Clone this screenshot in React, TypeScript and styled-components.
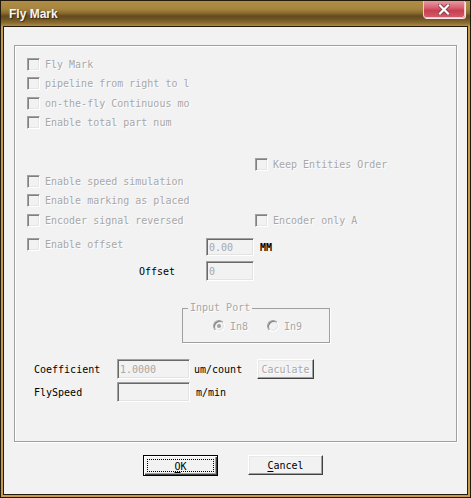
import React from "react";
import styled, { createGlobalStyle, css } from "styled-components";

const Global = createGlobalStyle`
  html, body { margin: 0; padding: 0; background: #f2f2f2; }
  body { width: 471px; height: 498px; overflow: hidden; }
`;

const mono = `"DejaVu Sans Mono", "Liberation Mono", monospace`;

const Window = styled.div`
  box-sizing: border-box;
  width: 471px;
  height: 498px;
  background: #c49c4c;
  border: 1px solid #221a0c;
  display: flex;
  flex-direction: column;
`;

const TitleBar = styled.div`
  height: 25px;
  flex: none;
  display: flex;
  align-items: flex-start;
  justify-content: space-between;
  background: linear-gradient(
    to bottom,
    #b28e48 0px,
    #a6843e 8px,
    #8a6c30 12px,
    #624b1e 15px,
    #6e5424 18px,
    #8c6c30 22px,
    #b08c44 25px
  );
`;

const Title = styled.span`
  margin: 6px 0 0 8px;
  font: bold 12px "Liberation Sans", Arial, sans-serif;
  line-height: 14px;
  color: #f4f4f4;
  text-shadow: 1px 1px 1px rgba(40, 25, 5, 0.7);
`;

const CloseButton = styled.div`
  box-sizing: border-box;
  width: 42px;
  height: 17px;
  margin-right: 5px;
  border: 1px solid #f2c6cc;
  border-top: none;
  border-radius: 0 0 3px 3px;
  background: linear-gradient(to bottom, #e89aa4 0%, #d86474 40%, #c8404f 60%, #d45868 100%);
  box-shadow: 1px 1px 0 #f8e8ea;
  display: flex;
  align-items: center;
  justify-content: center;
`;

const Client = styled.div`
  flex: 1;
  margin: 0 2px 2px;
  border: 1px solid #221a0c;
  background: #f2f2f2;
  display: flex;
  flex-direction: column;
`;

const Panel = styled.div`
  box-sizing: border-box;
  margin: 18px 0 0 10px;
  width: 443px;
  height: 397px;
  border: 1px solid #a0a0a0;
  box-shadow: inset 1px 1px 0 #fff, 1px 1px 0 #fff;
  padding-left: 12px;
  display: flex;
  flex-direction: column;
`;

const Row = styled.div<{ $mt: number; $h?: number; $top?: boolean }>`
  display: flex;
  align-items: ${(p) => (p.$top ? "flex-start" : "center")};
  height: ${(p) => p.$h ?? 16}px;
  margin-top: ${(p) => p.$mt}px;
`;

const Cell = styled.div<{ $w?: number; $ml?: number; $mt?: number }>`
  display: flex;
  align-items: center;
  flex: none;
  ${(p) => (p.$w !== undefined ? `width: ${p.$w}px;` : "")}
  margin-left: ${(p) => p.$ml ?? 0}px;
  margin-top: ${(p) => p.$mt ?? 0}px;
`;

const Box = styled.span`
  box-sizing: border-box;
  width: 13px;
  height: 13px;
  flex: none;
  border: 1px solid;
  border-color: #a0a0a0 #ffffff #ffffff #a0a0a0;
  box-shadow: inset 1px 1px 0 #808080, inset -1px -1px 0 #e6e6e6;
  background: #f2f2f2;
  margin-right: 5px;
`;

const Disabled = styled.span`
  font: 10px ${mono};
  line-height: 18px;
  height: 16px;
  color: #a8a8a8;
  text-shadow: 1px 1px 0 #ffffff;
  white-space: pre;
`;

const Label = styled.span<{ $bold?: boolean }>`
  font: ${(p) => (p.$bold ? "bold " : "")}10px ${mono};
  line-height: 18px;
  height: 16px;
  color: #000;
  white-space: pre;
`;

const Edit = styled.div<{ $w: number; $h: number }>`
  box-sizing: border-box;
  width: ${(p) => p.$w}px;
  height: ${(p) => p.$h}px;
  flex: none;
  border: 1px solid;
  border-color: #a0a0a0 #ffffff #ffffff #a0a0a0;
  box-shadow: inset 1px 1px 0 #696969, inset -1px -1px 0 #e3e3e3;
  background: #f2f2f2;
  padding: 1px 0 0 2px;
  display: flex;
  align-items: center;
  font: 10px ${mono};
  color: #a8a8a8;
`;

const RaisedButton = styled.div<{ $w: number; $default?: boolean; $disabled?: boolean }>`
  box-sizing: border-box;
  position: relative;
  width: ${(p) => p.$w}px;
  height: 20px;
  flex: none;
  background: #f2f2f2;
  border: 1px solid;
  border-color: #ffffff #404040 #404040 #ffffff;
  box-shadow: inset -1px -1px 0 #a0a0a0, inset 1px 1px 0 #e8e8e8;
  display: flex;
  align-items: center;
  justify-content: center;
  padding-top: 1px;
  font: 10px ${mono};
  color: ${(p) => (p.$disabled ? "#a8a8a8" : "#000")};
  text-shadow: ${(p) => (p.$disabled ? "1px 1px 0 #fff" : "none")};
  ${(p) =>
    p.$default &&
    css`
      height: 21px;
      border: 1px solid #000;
      box-shadow: inset 1px 1px 0 #fff, inset -1px -1px 0 #404040, inset -2px -2px 0 #a0a0a0;
    `}
`;

const FocusRect = styled.span`
  position: absolute;
  inset: 3px;
  border: 1px dotted #000;
`;

const Mnemonic = styled.span`
  text-decoration: underline;
  text-underline-offset: 2px;
`;

const Group = styled.fieldset`
  box-sizing: border-box;
  width: 148px;
  min-width: 0;
  margin: 21px 0 0 155px;
  padding: 0;
  border: 1px solid #a0a0a0;
  box-shadow: 1px 1px 0 #fff;
`;

const Legend = styled.legend`
  margin-left: 5px;
  padding: 0 2px;
  font: 10px ${mono};
  line-height: 12px;
  color: #a8a8a8;
  text-shadow: 1px 1px 0 #fff;
`;

const RadioRow = styled.div`
  display: flex;
  align-items: center;
  height: 16px;
  margin: 4px 0 8px 30px;
`;

const Radio = styled.span<{ $checked?: boolean; $ml?: number }>`
  box-sizing: border-box;
  width: 12px;
  height: 12px;
  flex: none;
  border-radius: 50%;
  border: 1px solid;
  border-color: #a0a0a0 #ffffff #ffffff #a0a0a0;
  box-shadow: inset 1px 1px 0 #808080, inset -1px -1px 0 #e3e3e3;
  background: #f2f2f2;
  margin-left: ${(p) => p.$ml ?? 0}px;
  margin-right: 5px;
  display: flex;
  align-items: center;
  justify-content: center;
  &::after {
    content: "";
    width: 4px;
    height: 4px;
    border-radius: 50%;
    background: ${(p) => (p.$checked ? "#a0a0a0" : "transparent")};
  }
`;

const Footer = styled.div`
  display: flex;
  justify-content: center;
  gap: 30px;
  margin-top: 13px;
  padding-right: 5px;
`;

const Check: React.FC<{ label: string }> = ({ label }) => (
  <>
    <Box />
    <Disabled>{label}</Disabled>
  </>
);

export default function App() {
  return (
    <>
      <Global />
      <Window>
        <TitleBar>
          <Title>Fly Mark</Title>
          <CloseButton>
            <svg width="12" height="11" viewBox="0 0 12 11">
              <path d="M2 1.5 L10 9.5 M10 1.5 L2 9.5" stroke="#8a3a44" strokeWidth="4" strokeLinecap="square" />
              <path d="M2 1.5 L10 9.5 M10 1.5 L2 9.5" stroke="#ffffff" strokeWidth="2.2" strokeLinecap="square" />
            </svg>
          </CloseButton>
        </TitleBar>
        <Client>
          <Panel>
            <Row $mt={10}>
              <Check label="Fly Mark" />
            </Row>
            <Row $mt={3}>
              <Check label="pipeline from right to l" />
            </Row>
            <Row $mt={4}>
              <Check label="on-the-fly Continuous mo" />
            </Row>
            <Row $mt={3}>
              <Check label="Enable total part num" />
            </Row>
            <Row $mt={26}>
              <Cell $ml={228}>
                <Check label="Keep Entities Order" />
              </Cell>
            </Row>
            <Row $mt={1}>
              <Check label="Enable speed simulation" />
            </Row>
            <Row $mt={3}>
              <Check label="Enable marking as placed" />
            </Row>
            <Row $mt={4}>
              <Cell $w={228}>
                <Check label="Encoder signal reversed" />
              </Cell>
              <Cell>
                <Check label="Encoder only A" />
              </Cell>
            </Row>
            <Row $mt={8} $h={20} $top>
              <Cell $w={179}>
                <Check label="Enable offset" />
              </Cell>
              <Cell $mt={2}>
                <Edit $w={48} $h={18}>0.00</Edit>
              </Cell>
              <Cell $ml={6} $mt={3}>
                <Label $bold>MM</Label>
              </Cell>
            </Row>
            <Row $mt={5} $h={20}>
              <Cell $ml={112} $w={67}>
                <Label>Offset</Label>
              </Cell>
              <Edit $w={48} $h={20}>0</Edit>
            </Row>
            <Group>
              <Legend>Input Port</Legend>
              <RadioRow>
                <Radio $checked />
                <Disabled>In8</Disabled>
                <Radio $ml={19} />
                <Disabled>In9</Disabled>
              </RadioRow>
            </Group>
            <Row $mt={16} $h={20}>
              <Cell $ml={7} $w={83}>
                <Label>Coefficient</Label>
              </Cell>
              <Edit $w={73} $h={20}>1.0000</Edit>
              <Cell $ml={4} $w={63}>
                <Label>um/count</Label>
              </Cell>
              <RaisedButton $w={57} $disabled>
                Caculate
              </RaisedButton>
            </Row>
            <Row $mt={3} $h={20}>
              <Cell $ml={7} $w={83}>
                <Label>FlySpeed</Label>
              </Cell>
              <Edit $w={73} $h={20} />
              <Cell $ml={6}>
                <Label>m/min</Label>
              </Cell>
            </Row>
          </Panel>
          <Footer>
            <RaisedButton $w={75} $default>
              <FocusRect />
              <span>
                <Mnemonic>O</Mnemonic>K
              </span>
            </RaisedButton>
            <RaisedButton $w={75}>
              <span>
                <Mnemonic>C</Mnemonic>ancel
              </span>
            </RaisedButton>
          </Footer>
        </Client>
      </Window>
    </>
  );
}
